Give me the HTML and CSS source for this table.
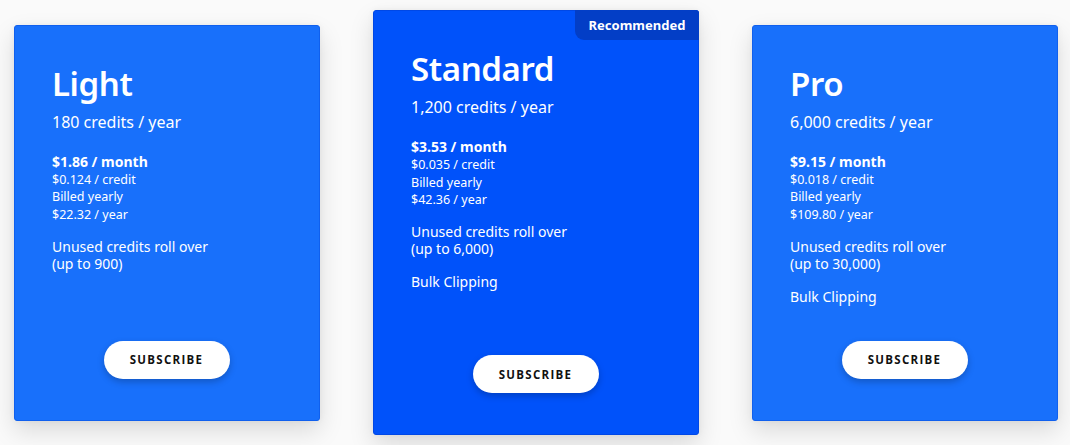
FILE: index.html
```html
<!DOCTYPE html>
<html>
<head>
<meta charset="utf-8">
<link rel="stylesheet" href="styles.css">
</head>
<body>
<div class="plans">
  <div class="card card-light">
    <h2 class="title">Light</h2>
    <div class="credits">180 credits / year</div>
    <div class="price">
      <div class="monthly">$1.86 / month</div>
      <div class="line">$0.124 / credit</div>
      <div class="line">Billed yearly</div>
      <div class="line">$22.32 / year</div>
    </div>
    <div class="feature">Unused credits roll over<br>(up to 900)</div>
    <button class="subscribe">SUBSCRIBE</button>
  </div>
  <div class="card card-standard">
    <div class="badge">Recommended</div>
    <h2 class="title">Standard</h2>
    <div class="credits">1,200 credits / year</div>
    <div class="price">
      <div class="monthly">$3.53 / month</div>
      <div class="line">$0.035 / credit</div>
      <div class="line">Billed yearly</div>
      <div class="line">$42.36 / year</div>
    </div>
    <div class="feature">Unused credits roll over<br>(up to 6,000)</div>
    <div class="feature extra">Bulk Clipping</div>
    <button class="subscribe">SUBSCRIBE</button>
  </div>
  <div class="card card-light">
    <h2 class="title">Pro</h2>
    <div class="credits">6,000 credits / year</div>
    <div class="price">
      <div class="monthly">$9.15 / month</div>
      <div class="line">$0.018 / credit</div>
      <div class="line">Billed yearly</div>
      <div class="line">$109.80 / year</div>
    </div>
    <div class="feature">Unused credits roll over<br>(up to 30,000)</div>
    <div class="feature extra">Bulk Clipping</div>
    <button class="subscribe">SUBSCRIBE</button>
  </div>
</div>
</body>
</html>
```
FILE: styles.css
```css
* { box-sizing: border-box; }
html, body { margin: 0; padding: 0; }
body {
  background: #fafafa;
  font-family: "Noto Sans", "Open Sans", sans-serif;
  color: #fff;
}
.plans {
  height: 445px;
  display: flex;
  align-items: center;
  gap: 53px;
  padding-left: 14px;
}
.card {
  position: relative;
  display: flex;
  flex-direction: column;
  align-items: flex-start;
  padding: 38px 20px 41px 37px;
  border-radius: 3px;
  box-shadow: 0 10px 24px rgba(0,0,0,0.13), 0 0 6px rgba(0,0,0,0.05);
}
.card-light {
  width: 306px;
  height: 396px;
  background: #1870fb;
  border: 1px solid #1060ee;
}
.card-standard {
  width: 326px;
  height: 425px;
  background: #0052fa;
  border: 1px solid #0048e6;
}
.badge {
  position: absolute;
  top: -1px;
  right: -1px;
  width: 124px;
  height: 30px;
  background: #033ec6;
  border-bottom-left-radius: 9px;
  border-top-right-radius: 3px;
  font-size: 13px;
  font-weight: 700;
  line-height: 30px;
  text-align: center;
}
.title {
  margin: 0;
  font-size: 33px;
  font-weight: 600;
  line-height: 40px;
  letter-spacing: -0.4px;
}
.credits {
  margin-top: 7px;
  font-size: 16px;
  line-height: 22px;
}
.price {
  margin-top: 20px;
}
.monthly {
  font-size: 14px;
  font-weight: 700;
  line-height: 18px;
}
.line {
  font-size: 12.5px;
  line-height: 17.7px;
}
.feature {
  margin-top: 14px;
  font-size: 14px;
  line-height: 17px;
}
.feature.extra {
  margin-top: 16px;
}
.subscribe {
  margin-top: auto;
  align-self: center;
  margin-left: -18px;
  width: 126px;
  height: 38px;
  border: none;
  border-radius: 19px;
  background: #fff;
  color: #111;
  font-family: "Open Sans", sans-serif;
  font-size: 11.5px;
  font-weight: 700;
  letter-spacing: 1.3px;
  box-shadow: 0 3px 7px rgba(0,0,0,0.22);
  padding: 0;
}
```
